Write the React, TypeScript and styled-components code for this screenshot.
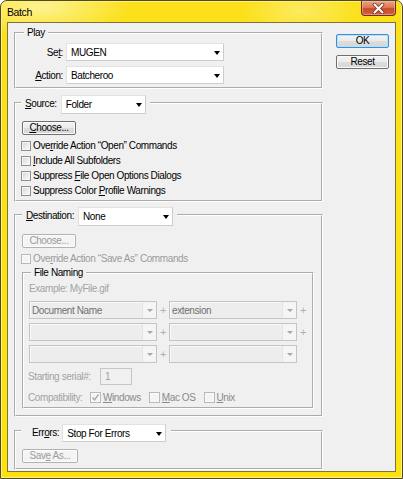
import React from "react";
import styled, { createGlobalStyle } from "styled-components";

const UI_FONT = `"Liberation Sans", Arial, sans-serif`;

const GlobalStyle = createGlobalStyle`
  html, body {
    margin: 0;
    padding: 0;
    background: #fff;
  }
  body {
    font-family: ${UI_FONT};
    font-size: 10px;
    letter-spacing: -0.4px;
    color: #000;
  }
`;

const Window = styled.div`
  width: 403px;
  height: 479px;
  box-sizing: border-box;
  border: 1px solid #4f4a26;
  border-radius: 7px 7px 0 0;
  padding: 0 6px 6px;
  display: flex;
  flex-direction: column;
  overflow: hidden;
  background:
    radial-gradient(ellipse 90px 30px at 40px 6px, rgba(255, 250, 200, 0.7), rgba(255, 250, 200, 0) 100%),
    radial-gradient(ellipse 60px 24px at 300px 10px, rgba(255, 245, 170, 0.5), rgba(255, 245, 170, 0) 100%),
    linear-gradient(180deg, #fbe01a 0%, #fde20f 100%);
  box-shadow: inset 1px 1px 0 #fff17a, inset -1px -1px 0 #fff17a;
`;

const TitleBar = styled.div`
  height: 21px;
  display: flex;
  justify-content: space-between;
  align-items: flex-start;
`;

const Title = styled.span`
  font-size: 10.5px;
  letter-spacing: -0.4px;
  line-height: 22px;
  color: #000;
`;

const CloseButton = styled.div`
  width: 35px;
  height: 15px;
  box-sizing: border-box;
  border: 1px solid #6b2d1c;
  border-top: none;
  border-radius: 0 0 4px 4px;
  background: linear-gradient(180deg, #e9a587 0%, #dd7a55 45%, #c9492a 55%, #d5613a 100%);
  box-shadow: inset 0 0 0 1px rgba(255, 210, 190, 0.45);
  display: flex;
  align-items: center;
  justify-content: center;
`;

const Client = styled.div`
  flex: 1;
  background: #f0f0f0;
  border: 1px solid #7b7440;
  padding: 3px 6px 0;
  display: flex;
  gap: 13px;
`;

const LeftColumn = styled.div`
  width: 309px;
  display: flex;
  flex-direction: column;
`;

const RightColumn = styled.div`
  width: 53px;
  padding-top: 8px;
  display: flex;
  flex-direction: column;
  gap: 7px;
`;

const Group = styled.fieldset<{ $pad: string; $top?: number; $width?: number }>`
  margin: ${p => p.$top ?? 0}px 0 0;
  min-width: 0;
  box-sizing: border-box;
  width: ${p => (p.$width ? `${p.$width}px` : "auto")};
  padding: ${p => p.$pad};
  border: 2px groove #fff;
`;

const Legend = styled.legend<{ $left: number; $pl?: number; $pr?: number }>`
  margin-left: ${p => p.$left}px;
  padding: 0 ${p => p.$pr ?? 3}px 0 ${p => p.$pl ?? 3}px;
  line-height: 13px;
  display: flex;
  align-items: flex-start;
  gap: 4px;
`;

/* label beside a drop-down in a group header; pulled up like the drop-down
   so the group line runs a little above their middle */
const LegendLabel = styled.span<{ $gap?: number }>`
  line-height: 18px;
  margin-bottom: -4px;
  margin-right: ${p => (p.$gap ?? 4) - 4}px;
`;

const FormGrid = styled.div`
  display: grid;
  grid-template-columns: 47px 158px;
  column-gap: 3px;
  row-gap: 5px;
  align-items: center;
`;

const FieldLabel = styled.span`
  text-align: right;
`;

const SelectBox = styled.div<{ $w: number; $h: number; $off?: boolean; $lift?: boolean }>`
  width: ${p => p.$w}px;
  height: ${p => p.$h}px;
  box-sizing: border-box;
  display: flex;
  align-items: center;
  margin-bottom: ${p => (p.$lift ? -4 : 0)}px;
  border: 1px solid;
  border-color: ${p => (p.$off ? "#c4c4c4" : "#e2e2e2 #cdcdcd #cdcdcd #e2e2e2")};
  background: ${p => (p.$off ? "#ededed" : "#fff")};
  box-shadow: ${p => (p.$off ? "inset 1px 1px 0 #fafafa" : "none")};
  color: ${p => (p.$off ? "#707070" : "#000")};
`;

const SelectText = styled.span<{ $off?: boolean }>`
  flex: 1;
  padding-left: ${p => (p.$off ? 2 : 4)}px;
  white-space: nowrap;
  overflow: hidden;
`;

const ArrowZone = styled.span<{ $off?: boolean }>`
  width: ${p => (p.$off ? 13 : 12)}px;
  align-self: stretch;
  display: flex;
  align-items: center;
  justify-content: center;
  background: ${p => (p.$off ? "#f5f5f5" : "transparent")};
  border-left: ${p => (p.$off ? "1px solid #e4e4e4" : "none")};
`;

const Arrow = styled.span<{ $off?: boolean }>`
  width: 0;
  height: 0;
  border-left: ${p => (p.$off ? 3 : 3.5)}px solid transparent;
  border-right: ${p => (p.$off ? 3 : 3.5)}px solid transparent;
  border-top: ${p => (p.$off ? 3 : 4)}px solid ${p => (p.$off ? "#a6a6a6" : "#000")};
  margin-top: 1px;
`;

const Button = styled.button<{ $w: number; $primary?: boolean }>`
  width: ${p => p.$w}px;
  height: 14px;
  padding: 0;
  box-sizing: border-box;
  font-family: ${UI_FONT};
  font-size: 10px;
  letter-spacing: -0.4px;
  line-height: 12px;
  color: #000;
  border-radius: 2px;
  border: 1px solid ${p => (p.$primary ? "#3c8fd4" : "#707070")};
  background: linear-gradient(180deg, #f3f3f3 0%, #ebebeb 50%, #dddddd 51%, #d6d6d6 100%);
  box-shadow: inset 0 0 0 1px ${p => (p.$primary ? "#b4e0f8" : "#fbfbfb")};

  &:disabled {
    color: #9b9b9b;
    border-color: #b2b2b2;
    background: #f4f4f4;
    box-shadow: inset 0 0 0 1px #fcfcfc;
  }
`;

const ButtonRow = styled.div<{ $top?: number }>`
  margin-top: ${p => p.$top ?? 0}px;
  display: flex;
`;

const CheckRow = styled.label<{ $off?: boolean; $top?: number }>`
  height: 15px;
  margin-top: ${p => p.$top ?? 0}px;
  display: flex;
  align-items: center;
  gap: 2px;
  color: ${p => (p.$off ? "#9b9b9b" : "#000")};
  white-space: nowrap;
`;

const Box = styled.span<{ $off?: boolean }>`
  width: 10px;
  height: 10px;
  margin-left: -1px;
  box-sizing: border-box;
  flex: none;
  display: flex;
  align-items: center;
  justify-content: center;
  border: 1px solid ${p => (p.$off ? "#b8b8b8" : "#8e8f8f")};
  background: ${p =>
    p.$off ? "#f4f4f4" : "linear-gradient(135deg, #cfd1d4 0%, #eeeeee 60%, #fbfbfb 100%)"};
  box-shadow: inset 0 0 0 1px ${p => (p.$off ? "#fafafa" : "#f4f4f4")};
`;

const NamingNote = styled.div`
  height: 14px;
  line-height: 14px;
  color: #a3a3a3;
`;

const NamingGrid = styled.div`
  margin-top: 5px;
  display: grid;
  grid-template-columns: 128px 12px 128px 12px;
  grid-auto-rows: 18px;
  row-gap: 4px;
  align-items: center;
`;

const Plus = styled.span`
  text-align: center;
  color: #b0b0b0;
  font-size: 11px;
`;

const InlineRow = styled.div<{ $top: number; $h: number }>`
  margin-top: ${p => p.$top}px;
  height: ${p => p.$h}px;
  display: flex;
  align-items: center;
  color: #a3a3a3;
  white-space: nowrap;
`;

const RowLabel = styled.span<{ $w: number }>`
  width: ${p => p.$w}px;
  margin-left: -1px;
  flex: none;
`;

const SerialInput = styled.div`
  width: 32px;
  height: 17px;
  box-sizing: border-box;
  border: 1px solid #c6c6c6;
  background: #f0f0f0;
  padding-left: 4px;
  line-height: 15px;
  color: #a0a0a0;
`;

const CompatOption = styled.span`
  display: flex;
  align-items: center;
  gap: 2px;
  margin-right: 8px;
  color: #8a8a8a;
`;

const CompatBox = styled(Box)`
  width: 11px;
  height: 11px;
  margin-left: 0;
`;

type DropdownProps = {
  value?: string;
  width: number;
  height?: number;
  disabled?: boolean;
  lift?: boolean;
};

const Dropdown = ({ value = "", width, height = 18, disabled, lift }: DropdownProps) => (
  <SelectBox $w={width} $h={height} $off={disabled} $lift={lift}>
    <SelectText $off={disabled}>{value}</SelectText>
    <ArrowZone $off={disabled}>
      <Arrow $off={disabled} />
    </ArrowZone>
  </SelectBox>
);

const Check = ({ children, off, top }: { children: React.ReactNode; off?: boolean; top?: number }) => (
  <CheckRow $off={off} $top={top}>
    <Box $off={off} />
    <span>{children}</span>
  </CheckRow>
);

const CloseGlyph = () => (
  <svg width="13" height="11" viewBox="0 0 13 11">
    <path d="M2.5 1.5 L10.5 9.5 M10.5 1.5 L2.5 9.5" stroke="#7a2f1e" strokeWidth="3.6" strokeLinecap="round" />
    <path d="M2.5 1.5 L10.5 9.5 M10.5 1.5 L2.5 9.5" stroke="#fff" strokeWidth="2" strokeLinecap="round" />
  </svg>
);

const Tick = () => (
  <svg width="9" height="9" viewBox="0 0 9 9">
    <path d="M1.5 4.5 L3.5 7 L7.5 1.5" fill="none" stroke="#a8a8a8" strokeWidth="1.3" />
  </svg>
);

export default function App() {
  return (
    <>
      <GlobalStyle />
      <Window>
        <TitleBar>
          <Title>Batch</Title>
          <CloseButton>
            <CloseGlyph />
          </CloseButton>
        </TitleBar>
        <Client>
          <LeftColumn>
            <Group $pad="4px 0 3px 0">
              <Legend $left={8}>Play</Legend>
              <FormGrid>
                <FieldLabel>
                  Se<u>t</u>:
                </FieldLabel>
                <Dropdown value="MUGEN" width={158} />
                <FieldLabel>
                  <u>A</u>ction:
                </FieldLabel>
                <Dropdown value="Batcheroo" width={158} />
              </FormGrid>
            </Group>

            <Group $top={6} $pad="11px 6px 2px">
              <Legend $left={-1} $pl={4} $pr={4}>
                <LegendLabel>
                  <u>S</u>ource:
                </LegendLabel>
                <Dropdown value="Folder" width={85} height={19} lift />
              </Legend>
              <ButtonRow>
                <Button $w={54}>
                  <u>C</u>hoose...
                </Button>
              </ButtonRow>
              <Check top={3}>
                Ove<u>r</u>ride Action “Open” Commands
              </Check>
              <Check>
                <u>I</u>nclude All Subfolders
              </Check>
              <Check>
                Suppress <u>F</u>ile Open Options Dialogs
              </Check>
              <Check>
                Suppress Color <u>P</u>rofile Warnings
              </Check>
            </Group>

            <Group $top={5} $pad="12px 6px 6px">
              <Legend $left={0} $pl={4} $pr={4}>
                <LegendLabel>
                  <u>D</u>estination:
                </LegendLabel>
                <Dropdown value="None" width={95} height={19} lift />
              </Legend>
              <ButtonRow>
                <Button $w={54} disabled>
                  Choose...
                </Button>
              </ButtonRow>
              <Check off top={3}>
                Ove<u>r</u>ride Action “Save As” Commands
              </Check>
              <Group $width={292} $pad="3px 5px 3px">
                <Legend $left={2}>File Naming</Legend>
                <NamingNote>Example: MyFile.gif</NamingNote>
                <NamingGrid>
                  <Dropdown value="Document Name" width={128} disabled />
                  <Plus>+</Plus>
                  <Dropdown value="extension" width={128} disabled />
                  <Plus>+</Plus>
                  <Dropdown width={128} disabled />
                  <Plus>+</Plus>
                  <Dropdown width={128} disabled />
                  <Plus>+</Plus>
                  <Dropdown width={128} disabled />
                  <Plus>+</Plus>
                  <Dropdown width={128} disabled />
                  <span />
                </NamingGrid>
                <InlineRow $top={5} $h={17}>
                  <RowLabel $w={72}>Starting serial#:</RowLabel>
                  <SerialInput>1</SerialInput>
                </InlineRow>
                <InlineRow $top={5} $h={14}>
                  <RowLabel $w={62}>Compatibility:</RowLabel>
                  <CompatOption>
                    <CompatBox $off>
                      <Tick />
                    </CompatBox>
                    <span>
                      <u>W</u>indows
                    </span>
                  </CompatOption>
                  <CompatOption>
                    <CompatBox $off />
                    <span>
                      <u>M</u>ac OS
                    </span>
                  </CompatOption>
                  <CompatOption>
                    <CompatBox $off />
                    <span>
                      <u>U</u>nix
                    </span>
                  </CompatOption>
                </InlineRow>
              </Group>
            </Group>

            <Group $top={7} $pad="11px 6px 5px">
              <Legend $left={-1} $pl={11} $pr={5}>
                <LegendLabel $gap={3}>
                  Err<u>o</u>rs:
                </LegendLabel>
                <Dropdown value="Stop For Errors" width={104} height={18} lift />
              </Legend>
              <ButtonRow>
                <Button $w={56} disabled>
                  Sav<u>e</u> As...
                </Button>
              </ButtonRow>
            </Group>
          </LeftColumn>

          <RightColumn>
            <Button $w={53} $primary>
              OK
            </Button>
            <Button $w={53}>Reset</Button>
          </RightColumn>
        </Client>
      </Window>
    </>
  );
}
